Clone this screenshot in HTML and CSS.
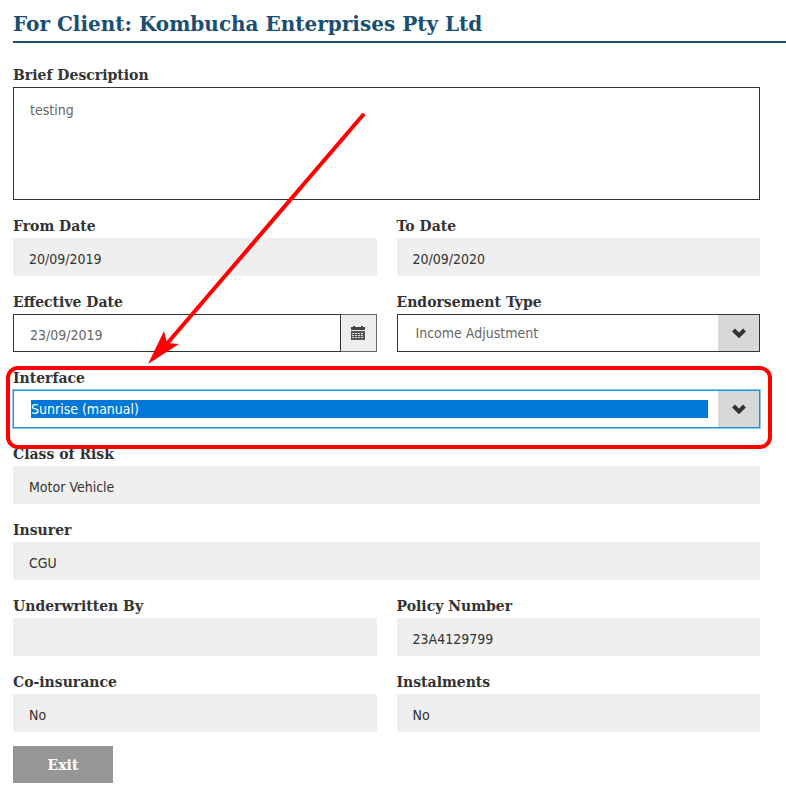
FILE: index.html
```html
<!DOCTYPE html>
<html lang="en">
<head>
    <meta charset="UTF-8">
    <meta name="viewport" content="width=device-width, initial-scale=1.0">
    <title>Kombucha Enterprises Pty Ltd</title>
    <link rel="stylesheet" href="styles.css">
</head>
<body>
<h1>For Client: Kombucha Enterprises Pty Ltd</h1>
<form class="policy-form">
    <div class="field wide">
        <label for="description">Brief Description</label>
        <textarea id="description" class="control description">testing</textarea>
    </div>
    <div class="field">
        <label for="from-date">From Date</label>
        <input id="from-date" class="readonly" type="text" value="20/09/2019" readonly>
    </div>
    <div class="field">
        <label for="to-date">To Date</label>
        <input id="to-date" class="readonly" type="text" value="20/09/2020" readonly>
    </div>
    <div class="field">
        <label for="effective-date">Effective Date</label>
        <div class="date-group">
            <input id="effective-date" class="control" type="text" value="23/09/2019">
            <button class="date-button" type="button" aria-label="Choose date">
                <svg width="14" height="14" viewBox="0 0 14 14">
                    <path fill="#444" d="M2 0h2v1h6V0h2v1h2v3H0V1h2z"/>
                    <path fill="#555" d="M0 5h14v9H0z"/>
                    <path stroke="#ddd" d="M1 7.500h12M1 9.500h12M1 11.500h12" stroke-dasharray="2 1"/>
                </svg>
            </button>
        </div>
    </div>
    <div class="field">
        <label for="endorsement">Endorsement Type</label>
        <div class="select-box">
            <select id="endorsement" class="control">
                <option>Income Adjustment</option>
            </select>
            <span class="select-arrow">
                <svg width="16" height="12" viewBox="0 0 16 12"><path d="M2.500 3L8 8.500 13.500 3" fill="none" stroke="#333" stroke-width="4"/></svg>
            </span>
        </div>
    </div>
    <div class="field wide marked">
        <label for="interface">Interface</label>
        <div class="select-box">
            <select id="interface" class="control selected">
                <option>Sunrise (manual)</option>
            </select>
            <span class="select-arrow">
                <svg width="16" height="12" viewBox="0 0 16 12"><path d="M2.500 3L8 8.500 13.500 3" fill="none" stroke="#333" stroke-width="4"/></svg>
            </span>
        </div>
    </div>
    <div class="field wide">
        <label for="risk">Class of Risk</label>
        <input id="risk" class="readonly" type="text" value="Motor Vehicle" readonly>
    </div>
    <div class="field wide">
        <label for="insurer">Insurer</label>
        <input id="insurer" class="readonly" type="text" value="CGU" readonly>
    </div>
    <div class="field">
        <label for="underwriter">Underwritten By</label>
        <input id="underwriter" class="readonly" type="text" value="" readonly>
    </div>
    <div class="field">
        <label for="policy-number">Policy Number</label>
        <input id="policy-number" class="readonly" type="text" value="23A4129799" readonly>
    </div>
    <div class="field">
        <label for="coinsurance">Co-insurance</label>
        <input id="coinsurance" class="readonly" type="text" value="No" readonly>
    </div>
    <div class="field">
        <label for="instalments">Instalments</label>
        <input id="instalments" class="readonly" type="text" value="No" readonly>
    </div>
    <button class="exit" type="button">Exit</button>
    <svg class="arrow" width="220" height="256" viewBox="0 0 220 256">
        <path d="M216 5L18 236" stroke="#f00" stroke-width="4" stroke-linecap="round"/>
        <path d="M1 254L17 221l3 12 12 1z" fill="#f00"/>
    </svg>
</form>
</body>
</html>
```

FILE: styles.css
```css
* {
    box-sizing: border-box;
}

body {
    margin: 0;
    padding: 8px 0 12px 13px;
    background-color: white;
    color: #333;
    font-family: "DejaVu Sans Condensed", Tahoma, sans-serif;
    font-size: 14px;
}

h1 {
    margin: 0 0 20px;
    height: 35px;
    border-bottom: 2px solid #1b4f72;
    color: #1b4f72;
    font-family: "DejaVu Serif", serif;
    font-size: 20px;
    line-height: 32px;
}

.policy-form {
    position: relative;
    display: grid;
    grid-template-columns: 1fr 1fr;
    gap: 14px 20px;
    margin-right: 26px;
}

.wide {
    grid-column: 1 / -1;
}

label {
    display: block;
    font-family: "DejaVu Serif", serif;
    font-size: 14px;
    font-weight: bold;
    line-height: 24px;
}

input, select, textarea {
    display: block;
    width: 100%;
    height: 38px;
    margin: 0;
    border-radius: 0;
    color: #333;
    font: inherit;
}

.readonly {
    padding: 4px 16px 0;
    border: 0;
    background-color: #efefef;
}

.control {
    padding: 4px 16px 0;
    border: 1px solid #333;
    background-color: white;
    color: #666;
}

.description {
    height: 113px;
    padding-top: 14px;
    resize: none;
}

.date-group {
    display: flex;
}

.date-button {
    display: flex;
    flex: none;
    align-items: center;
    justify-content: center;
    width: 36px;
    padding: 0;
    border: 1px solid #666;
    border-left: 0;
    background-color: #eee;
}

.select-box {
    position: relative;
}

select.control {
    appearance: none;
    padding: 0 52px 0 18px;
}

select.selected {
    padding: 9px 51px 9px 17px;
    border-color: #1b94e0;
    box-shadow: 0 0 0 1px #8ec9f2;
    background-color: #0078d7;
    background-clip: content-box;
    color: white;
}

.select-arrow {
    position: absolute;
    top: 1px;
    right: 1px;
    bottom: 1px;
    display: flex;
    align-items: center;
    justify-content: center;
    width: 41px;
    background-color: #d8d8d8;
    pointer-events: none;
}

/* red highlight drawn round the interface field */
.marked {
    position: relative;
}

.marked::after {
    content: "";
    position: absolute;
    inset: 0 -12px -21px -7px;
    border: 4px solid red;
    border-radius: 12px;
    pointer-events: none;
    z-index: 1;
}

.arrow {
    position: absolute;
    top: 47px;
    left: 134px;
    pointer-events: none;
}

.exit {
    width: 100px;
    height: 37px;
    border: 0;
    background-color: #969696;
    color: white;
    font-family: "DejaVu Serif", serif;
    font-size: 14px;
    font-weight: bold;
}
```
